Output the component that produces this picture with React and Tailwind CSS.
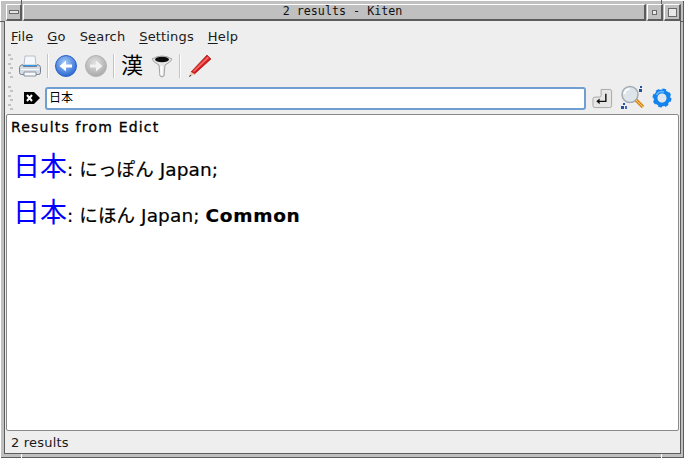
const Sep = () => <div className="w-px h-[24px] bg-[#c4c4c4] border-r border-white box-content mx-[5px]" />;

const Grip = () => (
  <div className="w-[5px] h-[26px] mr-[5px] flex flex-col justify-between py-px">
    {[0, 1, 2, 3, 4, 5].map(i => (
      <div key={i} className={`w-[3px] h-[2px] bg-[#c2c2c2] ${i % 2 ? 'ml-[2px]' : ''}`} />
    ))}
  </div>
);

function MenuItem({ pre = '', u, rest }) {
  return <span>{pre}<span className="underline underline-offset-2">{u}</span>{rest}</span>;
}

const PrintIcon = () => (
  <svg width="24" height="24" viewBox="0 0 24 24">
    <path d="M7 2h10l1 9H6z" fill="#f4f8fb" stroke="#b5c0cc" />
    <path d="M5 11h14v3H5z" fill="#2f9bf0" />
    <path d="M1.500 13.500q0-2 3-3l1 2h13l1-2q3 1 3 3v5q0 2-2 2h-17q-2 0-2-2z" fill="#d5dbe2" stroke="#74808f" />
    <path d="M3 15.500h18" stroke="#f7f9fb" />
    <path d="M6 18h12v4H6z" fill="#f7f9fb" stroke="#8a94a0" />
  </svg>
);

const BackIcon = ({ gray }) => {
  const id = gray ? 'g' : 'b';
  return (
    <svg width="24" height="24" viewBox="0 0 24 24">
      <defs>
        <radialGradient id={id} cx="45%" cy="35%" r="70%">
          <stop offset="0%" stopColor={gray ? '#e2e2e2' : '#a9cdf7'} />
          <stop offset="100%" stopColor={gray ? '#a4a4a4' : '#1f5fd0'} />
        </radialGradient>
      </defs>
      <circle cx="12" cy="12" r="10.500" fill={`url(#${id})`} stroke={gray ? '#b4b4b4' : '#2a63c6'} />
      {gray
        ? <path d="M6 10.500h6V6.500l6.500 5.500-6.500 5.500v-4H6z" fill="#f2f2f2" />
        : <path d="M18 10.500h-6V6.500L5.500 12l6.500 5.500v-4h6z" fill="#ffffff" />}
    </svg>
  );
};

const FunnelIcon = () => (
  <svg width="22" height="24" viewBox="0 0 22 24">
    <path d="M1 5q10-6 20 0-1 3-7 6l-1 11q-2 2-4 0L8 11Q2 8 1 5z" fill="#e6e6e6" stroke="#a2a2a2" />
    <ellipse cx="11" cy="5.500" rx="7" ry="2.800" fill="#0c0c0c" />
    <path d="M9.500 12h2v9h-2z" fill="#ffffff" />
  </svg>
);

const PenIcon = () => (
  <svg width="24" height="24" viewBox="0 0 24 24">
    <path d="M19 1l4 4L6.500 20 3 18z" fill="#d81a1a" stroke="#8e0f0f" strokeWidth="0.600" />
    <path d="M19.500 2.500l1.500 1.500L6 18l-1-1z" fill="#f36a6a" />
    <path d="M3 18l3.500 2L1 23z" fill="#e8c9a8" />
    <path d="M2 21l1.500.800L1 23z" fill="#222222" />
  </svg>
);

const TagClearIcon = () => (
  <svg width="16" height="12" viewBox="0 0 16 12">
    <path d="M0 0h10l6 6-6 6H0z" fill="#000000" />
    <path d="M3 3l5 6M8 3l-5 6" stroke="#ffffff" strokeWidth="2" />
  </svg>
);

const ReturnIcon = () => (
  <svg width="21" height="21" viewBox="0 0 22 22">
    <path d="M9.500 1.500h9q2 0 2 2v15q0 2-2 2H3q-2 0-2-2v-7q0-2 2-2h5q1.500 0 1.500-1.500z" fill="#e6e6e6" stroke="#a6a6a6" />
    <path d="M14.500 6v8H7" fill="none" stroke="#111111" strokeWidth="1.500" />
    <path d="M8 11v6l-3.500-3z" fill="#111111" />
  </svg>
);

const SearchIcon = () => (
  <svg width="25" height="26" viewBox="0 0 25 26">
    <circle cx="10" cy="9.500" r="8" fill="#dde4ea" stroke="#a4adb6" strokeWidth="1.500" />
    <path d="M4.500 9a5 5 0 0 1 5-5" stroke="#ffffff" strokeWidth="2" fill="none" />
    <path d="M16 15l7 7" stroke="#d98a1e" strokeWidth="3.500" />
    <path d="M16 15l7 7" stroke="#f6c877" strokeWidth="1" />
    <rect x="20" y="1" width="2" height="2" fill="#27509e" />
    <rect x="19" y="4" width="3" height="3" fill="#27509e" />
    <rect x="3" y="18" width="2" height="2" fill="#27509e" />
    <rect x="1" y="21" width="3" height="3" fill="#27509e" />
    <rect x="5" y="21" width="2" height="3" fill="#3f69b5" />
  </svg>
);

const GearIcon = () => (
  <svg width="22" height="22" viewBox="0 0 22 22">
    <circle cx="11" cy="11" r="8" fill="none" stroke="#1583ee" strokeWidth="3" strokeDasharray="3.500 2.800" />
    <circle cx="11" cy="11" r="6.500" fill="none" stroke="#1583ee" strokeWidth="4" />
    <path d="M5.500 8a6 6 0 0 1 7.500-3" stroke="#66b9ff" strokeWidth="1.500" fill="none" />
    <circle cx="11" cy="11" r="4.200" fill="#dfe6ec" />
  </svg>
);

function TitleButton({ children, className = '' }) {
  return (
    <div className={`h-[17px] bg-[#c0c0c0] border-t border-l border-white border-r-2 border-b-2 border-r-[#5c5c5c] border-b-[#5c5c5c] flex items-center justify-center ${className}`}>
      {children}
    </div>
  );
}

function Result({ kana, common }) {
  return (
    <p className="text-[18.500px] leading-[46px] h-[46px] whitespace-nowrap text-black tracking-[0.1px] [-webkit-text-stroke:0.200px_black]">
      <span className="text-[#0000ff] text-[27px] tracking-normal [-webkit-text-stroke:0px]">日本</span>
      <span>: {kana} Japan; </span>
      {common && <span className="font-bold tracking-[0.7px]">Common</span>}
    </p>
  );
}

export default function App() {
  return (
    <div
      className="relative w-[684px] h-[458px] bg-[#c0c0c0] pt-[4px] pl-[4px] pr-[3px] pb-[4px] flex flex-col overflow-hidden shadow-[inset_1px_1px_0_#ffffff,inset_-1px_-1px_0_#5c5c5c]"
      style={{ fontFamily: '"DejaVu Sans", "Noto Sans CJK JP", sans-serif' }}
    >
      {/* frame notches */}
      <div className="absolute left-[21px] top-0 w-px h-[4px] bg-[#5c5c5c]" />
      <div className="absolute left-[661px] top-0 w-px h-[4px] bg-[#5c5c5c]" />
      <div className="absolute left-0 top-[21px] w-[4px] h-px bg-[#5c5c5c]" />
      <div className="absolute right-0 top-[21px] w-[3px] h-px bg-[#5c5c5c]" />
      <div className="absolute left-[21px] bottom-0 w-px h-[4px] bg-[#ffffff]" />
      <div className="absolute left-[661px] bottom-0 w-px h-[4px] bg-[#ffffff]" />

      <div className="flex h-[17px] shrink-0 pl-[2px] gap-[1px]">
        <TitleButton className="w-[16px]">
          <div className="w-[10px] h-[4px] border border-[#6a6a6a] bg-[#e4e4e4]" />
        </TitleButton>
        <TitleButton className="flex-1">
          <span className="text-[11.700px] pl-[17px] text-[#111111]" style={{ fontFamily: '"DejaVu Sans Mono", monospace' }}>2 results - Kiten</span>
        </TitleButton>
        <TitleButton className="w-[16px]">
          <div className="w-[5px] h-[5px] border border-[#6a6a6a] bg-[#e8e8e8]" />
        </TitleButton>
        <TitleButton className="w-[17px]">
          <div className="w-[9px] h-[9px] border border-[#6a6a6a] bg-[#e8e8e8]" />
        </TitleButton>
      </div>

      <div className="flex-1 flex flex-col border-l border-r border-b border-[#5c5c5c] bg-[#eeeeee] min-h-0">
        <div className="h-[29px] shrink-0 flex items-center gap-[14px] pl-[6px] pt-[2px] text-[13px] tracking-[0.150px] text-[#1a1a1a]">
          <MenuItem u="F" rest="ile" />
          <MenuItem u="G" rest="o" />
          <MenuItem pre="S" u="e" rest="arch" />
          <MenuItem u="S" rest="ettings" />
          <MenuItem u="H" rest="elp" />
        </div>

        <div className="h-[32px] shrink-0 flex items-center pl-[3px]">
          <Grip />
          <PrintIcon />
          <Sep />
          <BackIcon />
          <div className="w-[6px]" />
          <BackIcon gray />
          <Sep />
          <span className="text-[22px] leading-[24px] w-[24px] ml-[1px] text-black">漢</span>
          <div className="w-[6px]" />
          <FunnelIcon />
          <div className="w-px" />
          <Sep />
          <div className="w-[2px]" />
          <PenIcon />
        </div>

        <div className="h-[32px] shrink-0 flex items-center pl-[3px] pr-[7px]">
          <Grip />
          <div className="w-[27px] flex justify-center"><TagClearIcon /></div>
          <div className="flex-1 h-[23px] bg-white border-2 border-[#6f9fd0] rounded-[3px] flex items-center pl-[2px] text-[12px] text-black">日本</div>
          <div className="w-[6px]" />
          <ReturnIcon />
          <div className="w-[7px]" />
          <SearchIcon />
          <div className="w-[6px]" />
          <GearIcon />
        </div>

        <div className="flex-1 min-h-0 mx-px bg-white border border-[#8a8a8a] rounded-[2px] pl-[4px] pt-[3px]">
          <h1 className="text-[14px] leading-[18px] font-normal tracking-[1.200px] text-black [-webkit-text-stroke:0.300px_black]">Results from Edict</h1>
          <div className="pt-[8px] pl-[2px]">
            <Result kana="にっぽん" />
            <Result kana="にほん" common />
          </div>
        </div>

        <div className="h-[22px] shrink-0 flex items-center pl-[6px] pt-[2px] text-[13px] tracking-[0.200px] text-[#1a1a1a]">2 results</div>
      </div>
    </div>
  );
}
